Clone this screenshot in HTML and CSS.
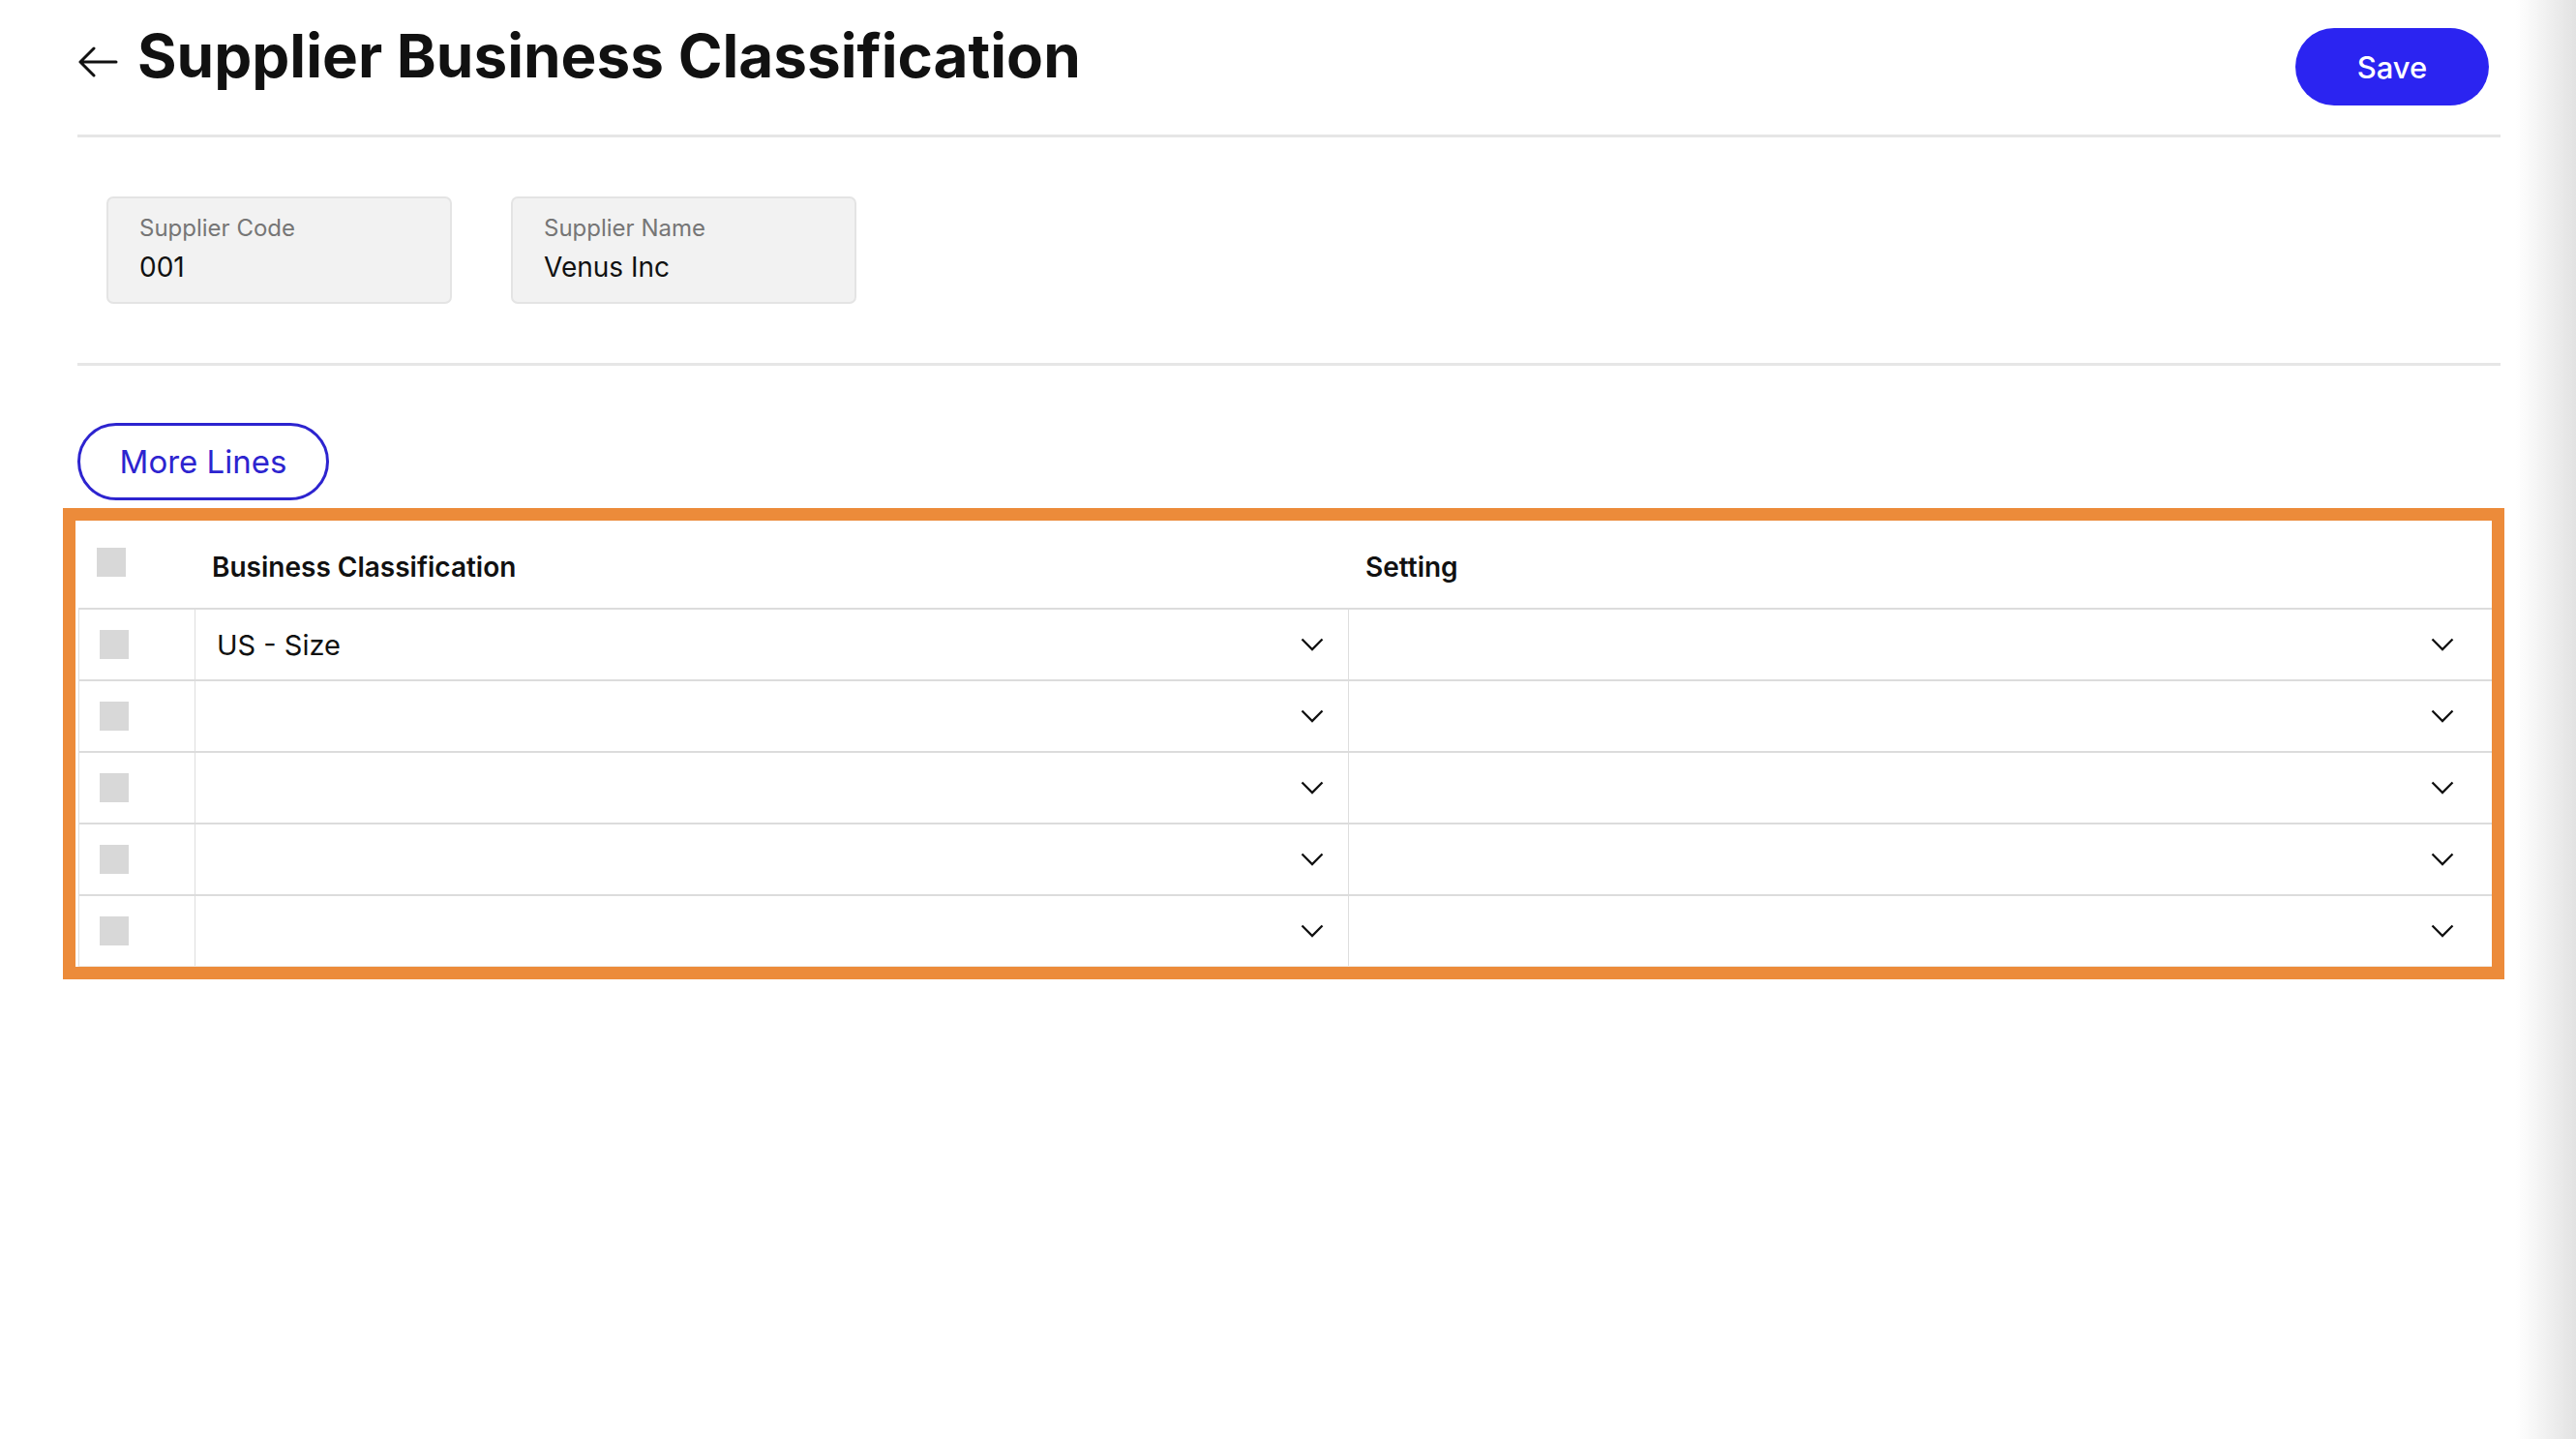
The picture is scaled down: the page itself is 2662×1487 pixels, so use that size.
FILE: index.html
```html
<!DOCTYPE html>
<html lang="en">
<head>
<meta charset="utf-8">
<title>Supplier Business Classification</title>
<link rel="stylesheet" href="styles.css">
</head>
<body>
<div class="page">
  <header class="topbar">
    <div class="title-group">
      <button class="back" aria-label="Back">
        <svg width="42" height="32" viewBox="0 0 42 32"><path d="M40 16H3M17 2L3 16l14 14" fill="none" stroke="#111" stroke-width="3" stroke-linecap="round" stroke-linejoin="round"/></svg>
      </button>
      <h1 class="title">Supplier Business Classification</h1>
    </div>
    <button class="btn-save">Save</button>
  </header>

  <section class="fields">
    <div class="field">
      <div class="field-label">Supplier Code</div>
      <div class="field-value">001</div>
    </div>
    <div class="field">
      <div class="field-label">Supplier Name</div>
      <div class="field-value">Venus Inc</div>
    </div>
  </section>

  <div class="actions">
    <button class="btn-outline">More Lines</button>
  </div>

  <div class="grid-frame">
    <div class="grid">
      <div class="grid-head">
        <div class="cell cell-check"><span class="box"></span></div>
        <div class="cell cell-head">Business Classification</div>
        <div class="cell cell-head">Setting</div>
      </div>
      <div class="grid-row">
        <div class="cell cell-check"><span class="box"></span></div>
        <div class="cell cell-select sel-a"><span class="sel-text">US - Size</span><svg class="chev" width="24" height="14" viewBox="0 0 24 14"><path d="M1.5 1.5L12 12 22.5 1.5" fill="none" stroke="#111" stroke-width="2.3"/></svg></div>
        <div class="cell cell-select sel-b"><span class="sel-text"></span><svg class="chev" width="24" height="14" viewBox="0 0 24 14"><path d="M1.5 1.5L12 12 22.5 1.5" fill="none" stroke="#111" stroke-width="2.3"/></svg></div>
      </div>
      <div class="grid-row">
        <div class="cell cell-check"><span class="box"></span></div>
        <div class="cell cell-select sel-a"><span class="sel-text"></span><svg class="chev" width="24" height="14" viewBox="0 0 24 14"><path d="M1.5 1.5L12 12 22.5 1.5" fill="none" stroke="#111" stroke-width="2.3"/></svg></div>
        <div class="cell cell-select sel-b"><span class="sel-text"></span><svg class="chev" width="24" height="14" viewBox="0 0 24 14"><path d="M1.5 1.5L12 12 22.5 1.5" fill="none" stroke="#111" stroke-width="2.3"/></svg></div>
      </div>
      <div class="grid-row">
        <div class="cell cell-check"><span class="box"></span></div>
        <div class="cell cell-select sel-a"><span class="sel-text"></span><svg class="chev" width="24" height="14" viewBox="0 0 24 14"><path d="M1.5 1.5L12 12 22.5 1.5" fill="none" stroke="#111" stroke-width="2.3"/></svg></div>
        <div class="cell cell-select sel-b"><span class="sel-text"></span><svg class="chev" width="24" height="14" viewBox="0 0 24 14"><path d="M1.5 1.5L12 12 22.5 1.5" fill="none" stroke="#111" stroke-width="2.3"/></svg></div>
      </div>
      <div class="grid-row">
        <div class="cell cell-check"><span class="box"></span></div>
        <div class="cell cell-select sel-a"><span class="sel-text"></span><svg class="chev" width="24" height="14" viewBox="0 0 24 14"><path d="M1.5 1.5L12 12 22.5 1.5" fill="none" stroke="#111" stroke-width="2.3"/></svg></div>
        <div class="cell cell-select sel-b"><span class="sel-text"></span><svg class="chev" width="24" height="14" viewBox="0 0 24 14"><path d="M1.5 1.5L12 12 22.5 1.5" fill="none" stroke="#111" stroke-width="2.3"/></svg></div>
      </div>
      <div class="grid-row last">
        <div class="cell cell-check"><span class="box"></span></div>
        <div class="cell cell-select sel-a"><span class="sel-text"></span><svg class="chev" width="24" height="14" viewBox="0 0 24 14"><path d="M1.5 1.5L12 12 22.5 1.5" fill="none" stroke="#111" stroke-width="2.3"/></svg></div>
        <div class="cell cell-select sel-b"><span class="sel-text"></span><svg class="chev" width="24" height="14" viewBox="0 0 24 14"><path d="M1.5 1.5L12 12 22.5 1.5" fill="none" stroke="#111" stroke-width="2.3"/></svg></div>
      </div>
    </div>
  </div>
</div>
<div class="edge-shade"></div>
</body>
</html>
```

FILE: styles.css
```css
* { box-sizing: border-box; }

html, body {
  margin: 0;
  padding: 0;
  background: #ffffff;
  color: #111111;
  font-family: "Inter", "Noto Sans", sans-serif;
}

.page {
  width: 2504px;
  margin-left: 80px;
}

/* ---- top bar ---- */
.topbar {
  display: flex;
  justify-content: space-between;
  align-items: flex-start;
  height: 139px;
  border-bottom: 3px solid #e6e6e6;
  box-sizing: content-box;
}

.title-group {
  display: flex;
  align-items: center;
  gap: 20px;
  padding-top: 22px;
}

.back {
  border: 0;
  background: none;
  padding: 0;
  margin-top: 12px;
  display: flex;
  cursor: pointer;
}

.title {
  margin: 0;
  font-size: 62px;
  font-weight: 700;
  line-height: 72px;
  letter-spacing: 0;
}

.btn-save {
  margin-top: 29px;
  margin-right: 12px;
  width: 200px;
  height: 80px;
  border: 0;
  border-radius: 40px;
  background: #2b24f1;
  color: #ffffff;
  font-family: inherit;
  font-size: 31px;
  font-weight: 500;
}

/* ---- header fields ---- */
.fields {
  display: flex;
  gap: 61px;
  padding: 61px 0 61px 30px;
  border-bottom: 3px solid #e6e6e6;
}

.field {
  width: 357px;
  height: 111px;
  background: #f2f2f2;
  border: 2px solid #e4e4e4;
  border-radius: 7px;
  padding: 14px 0 0 32px;
}

.field-label {
  font-size: 24px;
  color: #767676;
  line-height: 34px;
}

.field-value {
  margin-top: 6px;
  font-size: 28px;
  color: #111;
  line-height: 34px;
}

/* ---- actions ---- */
.actions {
  padding-top: 59px;
  padding-bottom: 8px;
}

.btn-outline {
  width: 260px;
  height: 80px;
  border: 3px solid #2d24cf;
  border-radius: 40px;
  background: #fff;
  color: #2d24cf;
  font-family: inherit;
  font-size: 33px;
  font-weight: 400;
}

/* ---- classification grid ---- */
.grid-frame {
  margin: 0 -4px 0 -15px;
  border: 13px solid #ec8b3a;
  padding-left: 3px;
}

.grid-head,
.grid-row {
  display: grid;
  grid-template-columns: 119px 1192px 1fr;
}

.grid-head {
  height: 92px;
  border-bottom: 2px solid #dcdcdc;
}

.grid-row {
  height: 74px;
  border-bottom: 2px solid #dcdcdc;
  border-left: 1px solid #dedede;
}

.grid-row.last {
  height: 73px;
  border-bottom: 1px solid #f1ece6;
}

.cell {
  display: flex;
  align-items: center;
}

.cell-check {
  padding-left: 19px;
}

.grid-row .cell-check {
  padding-left: 21px;
}

.box {
  display: block;
  width: 30px;
  height: 30px;
  background: #d8d8d8;
}

.grid-head .box {
  margin-top: -4px;
}

.cell-head {
  padding-left: 19px;
  padding-top: 6px;
  font-size: 28px;
  font-weight: 600;
}

.cell-select {
  justify-content: space-between;
  padding-left: 22px;
  border-left: 1px solid #dedede;
  font-size: 29px;
}

.sel-a { padding-right: 25px; }
.sel-b { padding-right: 39px; }

.chev { display: block; flex: none; }

/* soft shade along the right edge of the viewport */
.edge-shade {
  position: fixed;
  top: 0;
  right: 0;
  bottom: 0;
  width: 62px;
  background: linear-gradient(to right, rgba(228,228,228,0), #e2e2e2);
  pointer-events: none;
}
```
